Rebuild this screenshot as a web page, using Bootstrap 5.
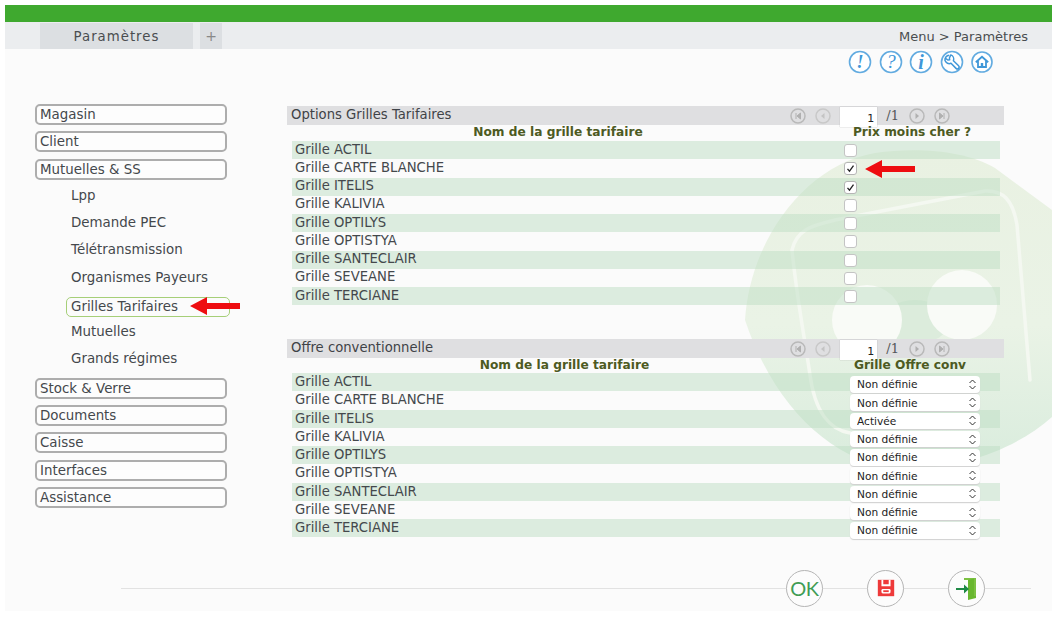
<!DOCTYPE html>
<html lang="fr"><head><meta charset="utf-8"><title>Paramètres</title>
<link href="https://cdn.jsdelivr.net/npm/bootstrap@5.3.0/dist/css/bootstrap.min.css" rel="stylesheet">
<style>
html,body{height:100%;background:#fff;overflow:hidden}
body{font-family:"DejaVu Sans","Liberation Sans",sans-serif;color:#3f4347;font-size:13.2px}
.frame{margin:5px 0 0 5px;width:1047px;height:606px;background:#fbfbfb;position:relative;overflow:hidden}
.greenbar{height:17px;background:#3fa92f}
.tabbar{height:27px;background:#ebedef;padding-left:35px;color:#4a4d50}
.tab-main{width:153px;height:26px;margin-top:1px;padding-top:2px;background:#dcdfe2;letter-spacing:1px;font-size:13.3px}
.tab-plus{width:22px;height:26px;margin-top:1px;margin-left:7px;background:#dcdfe2;color:#888;font-size:14px}
.crumb{margin-left:auto;margin-right:24px;padding-top:3px;font-size:13px}
.helpbar{height:33px;padding-left:843px;gap:6.5px;padding-top:1px}
.watermark{position:absolute;left:740px;top:145px;width:307px;height:323px}
.bodyrow{position:relative;padding-top:22px}
.sidenav{width:282px;padding-left:30px;flex:none;font-size:13.4px}
.navbox{display:block;width:192px;height:21px;border:2px solid #adadad;border-radius:5px;background:#fdfdfd;padding-left:3px;line-height:18px;margin-bottom:6.3px;color:#44484c}
.subnav{padding:4px 0 3px 36px;height:auto}
.subitem{height:27.4px;line-height:24px;color:#44484c}
.subitem.current{height:20px;width:164px;margin:4px 0 2.7px -5px;padding-left:4px;line-height:17px;border:1.5px solid #a6cf78;border-radius:5px}
.main{width:717px;margin-top:2px}
.panel-head{height:19px;background:#dfdfe1;padding-left:4px;line-height:17px;font-size:13.2px}
.pager{margin-left:auto;margin-right:54px;gap:9px;height:19px}
.pager input{width:37px;height:20px;align-self:flex-start;margin:1px 0 0 0;border:0;background:#fff;box-shadow:0 0 1px #aaa;text-align:right;font-size:11px;font-family:"DejaVu Sans",sans-serif;padding:2px 3px 0 0;color:#222;border-radius:0;position:relative}
.pg-num{font-size:13px;margin:0 1px 0 0;color:#55585b;font-family:"DejaVu Serif","DejaVu Sans",serif}
.heads{height:16px;font-weight:700;color:#4d5a22;font-size:12.2px;line-height:15px;margin-left:5px;width:708px;position:relative}
.hd-a{width:532px;text-align:center}
.hd-b{width:176px;text-align:center;margin-left:0}
.gridrows{margin-left:5px;width:708px}
.gridline{height:18.25px;line-height:17px;padding-left:3px;font-size:13.2px;color:#44484c;align-items:center}
.gridline:nth-child(odd){background:rgba(190,222,195,.5)}
.gridline>span{width:549px;flex:none;padding-bottom:2px}
.gridline .form-check-input{width:13px;height:13px;margin:1px 0 0 0;border:1px solid #c4c4c4;border-radius:3px;background-color:#fff;flex:none}
.gridline .form-check-input:checked{background-color:#fff;border-color:#b5b5b5;background-image:url("data:image/svg+xml,%3Csvg xmlns='http://www.w3.org/2000/svg' viewBox='0 0 13 13'%3E%3Cpath d='M3.5 6.8l2 2.4 4-5.6' fill='none' stroke='%23222' stroke-width='1.3'/%3E%3C/svg%3E");background-size:13px}
.gridline .form-select{width:130px;height:16.5px;flex:none;align-self:flex-start;padding:0 0 0 7px;margin-top:3px;border:0;border-radius:4px;font-size:10.6px;line-height:16px;color:#222;box-shadow:0 1px 1px #d0d0d0;background-color:#fff;background-position:right 3px center;background-size:9px 11px;background-image:url("data:image/svg+xml,%3Csvg xmlns='http://www.w3.org/2000/svg' viewBox='0 0 9 11'%3E%3Cpath d='M1.5 4l3-3 3 3M1.5 7l3 3 3-3' fill='none' stroke='%23333' stroke-width='1'/%3E%3C/svg%3E")}
.secondblock{margin-top:33.75px}
.secondblock .heads{height:15px}
.secondblock .gridline>span{width:555px;padding-bottom:1px}
.secondblock .hd-a{width:545px}
.secondblock .hd-b{width:146px;margin-left:0}
.footbar{position:absolute;left:116px;width:910px;top:561px;height:44px;align-items:center;justify-content:flex-end;padding-right:46px;gap:44px}
.footbar::before{content:"";position:absolute;left:0;right:0;top:22px;height:1px;background:#e2e2e2}
.roundbtn{width:37px;height:37px;border:1.5px solid #b5b5b5;border-radius:50%;background:#fcfcfc;position:relative;padding:0;display:flex;align-items:center;justify-content:center}
.oktext{font-family:"Lato","Liberation Sans",sans-serif;font-weight:400;font-size:20px;color:#3f9c55;letter-spacing:-.5px;line-height:1}
.redarrow{position:absolute;width:51px;height:18px}
</style></head><body>
<div class="frame">
 <svg class="watermark" viewBox="0 0 307 323" aria-hidden="true">
  <defs><linearGradient id="wm" x1="0" y1="0" x2="0" y2="1"><stop offset="0" stop-color="#e9f1e2"/><stop offset=".55" stop-color="#eaf3e6"/><stop offset="1" stop-color="#d9ecdd"/></linearGradient></defs>
  <path d="M0 170C5 90 60 15 130 3 170-3 220 0 250 18L307 60V267C270 300 210 322 150 318 90 312 30 260 0 170Z" fill="url(#wm)"/>
  <path d="M47 100C52 78 70 75 90 70L240 41C258 40 268 50 272 75L285 230M47 100C52 150 60 190 65 225 70 262 85 280 105 283" fill="none" stroke="#f4f8f1" stroke-width="3.5" stroke-linecap="round"/>
  <ellipse cx="170" cy="172" rx="34" ry="22" fill="#dcecdc"/>
  <circle cx="122" cy="170" r="35" fill="#f9fbf7"/><circle cx="217" cy="155" r="35" fill="#f9fbf7"/>
 </svg>
 <div class="greenbar"></div>
 <div class="tabbar d-flex align-items-center">
  <div class="tab-main d-flex align-items-center justify-content-center">Paramètres</div>
  <div class="tab-plus d-flex align-items-center justify-content-center">+</div>
  <div class="crumb">Menu &gt; Paramètres</div>
 </div>
 <div class="helpbar d-flex">
  <svg width="24" height="24" viewBox="0 0 24 24"><circle cx="12" cy="12" r="10.5" fill="#fff" stroke="#62abe0" stroke-width="1.6"/><text x="12" y="18" text-anchor="middle" font-family="Liberation Serif" font-style="italic" font-weight="700" font-size="18" fill="#3f97d8">!</text></svg>
  <svg width="24" height="24" viewBox="0 0 24 24"><circle cx="12" cy="12" r="10.5" fill="#fff" stroke="#62abe0" stroke-width="1.6"/><text x="12" y="18" text-anchor="middle" font-family="Liberation Serif" font-style="italic" font-size="19" fill="#3f97d8">?</text></svg>
  <svg width="24" height="24" viewBox="0 0 24 24"><circle cx="12" cy="12" r="10.5" fill="#fff" stroke="#62abe0" stroke-width="1.6"/><text x="12" y="18.5" text-anchor="middle" font-family="Liberation Serif" font-style="italic" font-weight="700" font-size="20" fill="#3f97d8">i</text></svg>
  <svg width="24" height="24" viewBox="0 0 24 24"><circle cx="12" cy="12" r="10.5" fill="#fff" stroke="#62abe0" stroke-width="1.6"/><path d="M9.2 5.2A4.6 4.6 0 0 0 5 10.6a4.6 4.6 0 0 0 6 2.7l5 5.1a1.8 1.8 0 0 0 2.6-2.6l-5.2-5a4.6 4.6 0 0 0-2.6-5.9L9.4 8 9.7 9.8 7.8 10 6 8.6" fill="none" stroke="#3f97d8" stroke-width="1.5" stroke-linejoin="round"/></svg>
  <svg width="24" height="24" viewBox="0 0 24 24"><circle cx="12" cy="12" r="10" fill="#fff" stroke="#62abe0" stroke-width="1.6"/><path d="M5.8 12.2 12 6.8l6.2 5.4M8 11v6h8v-6" fill="none" stroke="#3f97d8" stroke-width="1.8"/><rect x="10.8" y="13" width="2.4" height="4" fill="#3f97d8"/></svg>
 </div>
 <div class="bodyrow d-flex">
  <nav class="sidenav">
   <a class="navbox text-decoration-none">Magasin</a>
   <a class="navbox text-decoration-none">Client</a>
   <a class="navbox text-decoration-none mb-0">Mutuelles &amp; SS</a>
   <div class="subnav">
    <div class="subitem">Lpp</div>
    <div class="subitem">Demande PEC</div>
    <div class="subitem">Télétransmission</div>
    <div class="subitem">Organismes Payeurs</div>
    <div class="subitem current">Grilles Tarifaires</div>
    <div class="subitem">Mutuelles</div>
    <div class="subitem">Grands régimes</div>
   </div>
   <a class="navbox text-decoration-none">Stock &amp; Verre</a>
   <a class="navbox text-decoration-none">Documents</a>
   <a class="navbox text-decoration-none">Caisse</a>
   <a class="navbox text-decoration-none">Interfaces</a>
   <a class="navbox text-decoration-none">Assistance</a>
  </nav>
  <main class="main">
   <section>
    <div class="panel-head d-flex"><span>Options Grilles Tarifaires</span>
     <div class="pager d-flex align-items-center">
      <svg width="16" height="16" viewBox="0 0 16 16"><circle cx="8" cy="8" r="7" fill="none" stroke="#b9b9b9" stroke-width="1.5"/><path d="M6 5v6M10.5 5 7 8l3.5 3z" fill="#b0b0b0" stroke="#b0b0b0"/></svg>
      <svg width="16" height="16" viewBox="0 0 16 16"><circle cx="8" cy="8" r="7" fill="none" stroke="#c8c8c8" stroke-width="1.5"/><path d="M9.5 5 6 8l3.5 3z" fill="#c4c4c4"/></svg>
      <input type="text" value="1" aria-label="Page"><span class="pg-num">/1</span>
      <svg width="16" height="16" viewBox="0 0 16 16"><circle cx="8" cy="8" r="7" fill="none" stroke="#b9b9b9" stroke-width="1.5"/><path d="M6.5 5 10 8l-3.5 3z" fill="#b0b0b0"/></svg>
      <svg width="16" height="16" viewBox="0 0 16 16"><circle cx="8" cy="8" r="7" fill="none" stroke="#b9b9b9" stroke-width="1.5"/><path d="M10 5v6M5.5 5 9 8l-3.5 3z" fill="#b0b0b0" stroke="#b0b0b0"/></svg>
     </div></div>
    <div class="heads d-flex"><div class="hd-a">Nom de la grille tarifaire</div><div class="hd-b">Prix moins cher ?</div></div>
    <div class="gridrows">
     <div class="gridline d-flex"><span>Grille ACTIL</span><input class="form-check-input" type="checkbox" aria-label="ACTIL"></div>
     <div class="gridline d-flex"><span>Grille CARTE BLANCHE</span><input class="form-check-input" type="checkbox" checked aria-label="CARTE BLANCHE"></div>
     <div class="gridline d-flex"><span>Grille ITELIS</span><input class="form-check-input" type="checkbox" checked aria-label="ITELIS"></div>
     <div class="gridline d-flex"><span>Grille KALIVIA</span><input class="form-check-input" type="checkbox" aria-label="KALIVIA"></div>
     <div class="gridline d-flex"><span>Grille OPTILYS</span><input class="form-check-input" type="checkbox" aria-label="OPTILYS"></div>
     <div class="gridline d-flex"><span>Grille OPTISTYA</span><input class="form-check-input" type="checkbox" aria-label="OPTISTYA"></div>
     <div class="gridline d-flex"><span>Grille SANTECLAIR</span><input class="form-check-input" type="checkbox" aria-label="SANTECLAIR"></div>
     <div class="gridline d-flex"><span>Grille SEVEANE</span><input class="form-check-input" type="checkbox" aria-label="SEVEANE"></div>
     <div class="gridline d-flex"><span>Grille TERCIANE</span><input class="form-check-input" type="checkbox" aria-label="TERCIANE"></div>
    </div>
   </section>
   <section class="secondblock">
    <div class="panel-head d-flex"><span>Offre conventionnelle</span>
     <div class="pager d-flex align-items-center">
      <svg width="16" height="16" viewBox="0 0 16 16"><circle cx="8" cy="8" r="7" fill="none" stroke="#b9b9b9" stroke-width="1.5"/><path d="M6 5v6M10.5 5 7 8l3.5 3z" fill="#b0b0b0" stroke="#b0b0b0"/></svg>
      <svg width="16" height="16" viewBox="0 0 16 16"><circle cx="8" cy="8" r="7" fill="none" stroke="#c8c8c8" stroke-width="1.5"/><path d="M9.5 5 6 8l3.5 3z" fill="#c4c4c4"/></svg>
      <input type="text" value="1" aria-label="Page"><span class="pg-num">/1</span>
      <svg width="16" height="16" viewBox="0 0 16 16"><circle cx="8" cy="8" r="7" fill="none" stroke="#b9b9b9" stroke-width="1.5"/><path d="M6.5 5 10 8l-3.5 3z" fill="#b0b0b0"/></svg>
      <svg width="16" height="16" viewBox="0 0 16 16"><circle cx="8" cy="8" r="7" fill="none" stroke="#b9b9b9" stroke-width="1.5"/><path d="M10 5v6M5.5 5 9 8l-3.5 3z" fill="#b0b0b0" stroke="#b0b0b0"/></svg>
     </div></div>
    <div class="heads d-flex"><div class="hd-a">Nom de la grille tarifaire</div><div class="hd-b">Grille Offre conv</div></div>
    <div class="gridrows">
     <div class="gridline d-flex"><span>Grille ACTIL</span><select class="form-select" aria-label="ACTIL"><option>Non définie</option></select></div>
     <div class="gridline d-flex"><span>Grille CARTE BLANCHE</span><select class="form-select" aria-label="CARTE BLANCHE"><option>Non définie</option></select></div>
     <div class="gridline d-flex"><span>Grille ITELIS</span><select class="form-select" aria-label="ITELIS"><option>Activée</option></select></div>
     <div class="gridline d-flex"><span>Grille KALIVIA</span><select class="form-select" aria-label="KALIVIA"><option>Non définie</option></select></div>
     <div class="gridline d-flex"><span>Grille OPTILYS</span><select class="form-select" aria-label="OPTILYS"><option>Non définie</option></select></div>
     <div class="gridline d-flex"><span>Grille OPTISTYA</span><select class="form-select" aria-label="OPTISTYA"><option>Non définie</option></select></div>
     <div class="gridline d-flex"><span>Grille SANTECLAIR</span><select class="form-select" aria-label="SANTECLAIR"><option>Non définie</option></select></div>
     <div class="gridline d-flex"><span>Grille SEVEANE</span><select class="form-select" aria-label="SEVEANE"><option>Non définie</option></select></div>
     <div class="gridline d-flex"><span>Grille TERCIANE</span><select class="form-select" aria-label="TERCIANE"><option>Non définie</option></select></div>
    </div>
   </section>
  </main>
 </div>
 <div class="footbar d-flex">
  <button class="roundbtn" type="button"><span class="oktext">OK</span></button>
  <button class="roundbtn" type="button"><svg width="20" height="20" viewBox="0 0 22 22"><path d="M2 2h18v18H2z" fill="#ee3a3a"/><path d="M6 2h2v5h6V2h2v7H6z" fill="#fff"/><rect x="6" y="12" width="10" height="5" rx="1.5" fill="#fff"/><rect x="8" y="13.5" width="6" height="2" fill="#ee3a3a"/></svg></button>
  <button class="roundbtn" type="button"><svg width="24" height="26" viewBox="0 0 24 26"><path d="M9 3h12v2H9z" fill="#7cc142"/><path d="M13 5l8-2v20l-8 2z" fill="#69b72f"/><path d="M19 3h2v18h-2z" fill="#7cc142"/><path d="M1 13h8V9.5l5 4.5-5 4.5V15H1z" fill="#1e8a46"/></svg></button>
 </div>
 <svg class="redarrow" style="left:860px;top:155px" viewBox="0 0 51 18"><path d="M0 9 17 0v6h33v6H17v6z" fill="#ee0d10"/></svg>
 <svg class="redarrow" style="left:185px;top:292px" viewBox="0 0 51 18"><path d="M0 9 17 0v6h33v6H17v6z" fill="#ee0d10"/></svg>
</div>
</body></html>
